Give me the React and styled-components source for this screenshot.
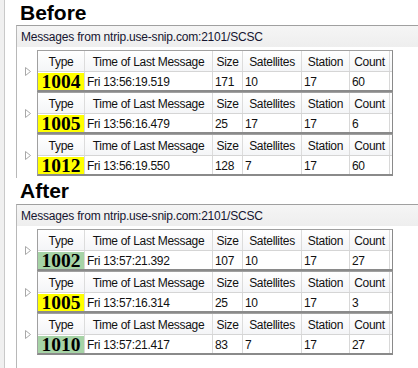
import React from 'react';
import styled, { createGlobalStyle } from 'styled-components';

const GlobalStyle = createGlobalStyle`
  html, body {
    margin: 0;
    padding: 0;
    background: #ffffff;
  }
  body {
    font-family: 'Liberation Sans', Arial, sans-serif;
    color: #111;
  }
`;

const Page = styled.div`
  display: flex;
  width: 418px;
  height: 368px;
  overflow: hidden;
`;

const Edge = styled.div`
  width: 4px;
  flex-shrink: 0;
  background: #f0f0f0;
  border-right: 1px solid #c9c9c9;
`;

const Content = styled.div`
  flex: 1;
  display: flex;
  flex-direction: column;
  padding-left: 11px;
  min-width: 0;
`;

const Title = styled.div`
  height: ${props => props.$height}px;
  padding-left: 4px;
  font-size: 21px;
  font-weight: 700;
  line-height: ${props => props.$height}px;
  color: #000;
`;

const Panel = styled.div`
  border-top: 1px solid #a0a0a0;
  border-left: 1px solid #b8b8b8;
  height: ${props => props.$height}px;
  flex-shrink: 0;
`;

const PanelHeader = styled.div`
  height: 21px;
  padding-left: 4px;
  padding-top: 2px;
  box-sizing: border-box;
  background: linear-gradient(#f5f5f5, #eeeeee);
  font-size: 12px;
  line-height: 19px;
  letter-spacing: -0.2px;
  color: #151530;
  white-space: nowrap;
`;

const PanelBody = styled.div`
  padding-top: 3px;
  display: flex;
  flex-direction: column;
`;

const Group = styled.div`
  display: flex;
  align-items: center;
`;

const Expander = styled.div`
  width: 20px;
  display: flex;
  justify-content: center;
  padding-left: 1px;
  box-sizing: border-box;
`;

const Table = styled.div`
  width: 356px;
  box-sizing: border-box;
  border: 1px solid #a0a0a0;
  border-right-color: #8a8a8a;
  border-bottom: 2px solid #8a8a8a;
`;

const Row = styled.div`
  display: grid;
  grid-template-columns: 47px 128px 30px 59px 48px 40px;
  padding-right: 2px;
  height: ${props => props.$height}px;
`;

const HeadRow = styled(Row)`
  background: linear-gradient(#ffffff, #f4f5f7);
  border-bottom: 1px solid #d5d5d5;
`;

const HeadCell = styled.div`
  border-right: 1px solid #dcdcdc;
  text-align: center;
  font-size: 12px;
  letter-spacing: -0.3px;
  padding-top: 3px;
  line-height: 16px;
  white-space: nowrap;
  overflow: hidden;
`;

const Cell = styled.div`
  border-right: 1px solid #d8d8d8;
  padding-left: 2px;
  padding-top: 2px;
  font-size: 12px;
  letter-spacing: -0.3px;
  line-height: 16px;
  white-space: nowrap;
  overflow: hidden;
`;

const TypeCell = styled.div`
  border-right: 1px solid #d8d8d8;
  padding-top: 1px;
  display: flex;
`;

const TypeBadge = styled.div`
  flex: 1;
  background: ${props => (props.$tone === 'green' ? '#a6d3a6' : '#ffff00')};
  text-align: center;
  font-family: 'Liberation Serif', 'Times New Roman', serif;
  font-weight: 700;
  font-size: 19.5px;
  line-height: 17px;
  color: #000;
`;

const columns = ['Type', 'Time of Last Message', 'Size', 'Satellites', 'Station', 'Count'];

const before = [
  { type: '1004', time: 'Fri 13:56:19.519', size: '171', sats: '10', station: '17', count: '60', tone: 'yellow' },
  { type: '1005', time: 'Fri 13:56:16.479', size: '25', sats: '17', station: '17', count: '6', tone: 'yellow' },
  { type: '1012', time: 'Fri 13:56:19.550', size: '128', sats: '7', station: '17', count: '60', tone: 'yellow' },
];

const after = [
  { type: '1002', time: 'Fri 13:57:21.392', size: '107', sats: '10', station: '17', count: '27', tone: 'green' },
  { type: '1005', time: 'Fri 13:57:16.314', size: '25', sats: '10', station: '17', count: '3', tone: 'yellow' },
  { type: '1010', time: 'Fri 13:57:21.417', size: '83', sats: '7', station: '17', count: '27', tone: 'green' },
];

const Arrow = () => (
  <svg width="6" height="9" viewBox="0 0 6 9">
    <polygon points="0.5,0.5 5.5,4.5 0.5,8.5" fill="#ffffff" stroke="#a8a8a8" strokeWidth="1" />
  </svg>
);

const MessageTable = ({ msg }) => (
  <Group>
    <Expander>
      <Arrow />
    </Expander>
    <Table>
      <HeadRow $height={20}>
        {columns.map(c => (
          <HeadCell key={c}>{c}</HeadCell>
        ))}
      </HeadRow>
      <Row $height={18}>
        <TypeCell>
          <TypeBadge $tone={msg.tone}>{msg.type}</TypeBadge>
        </TypeCell>
        <Cell>{msg.time}</Cell>
        <Cell>{msg.size}</Cell>
        <Cell>{msg.sats}</Cell>
        <Cell>{msg.station}</Cell>
        <Cell>{msg.count}</Cell>
      </Row>
    </Table>
  </Group>
);

const MessagePanel = ({ height, rows }) => (
  <Panel $height={height}>
    <PanelHeader>Messages from ntrip.use-snip.com:2101/SCSC</PanelHeader>
    <PanelBody>
      {rows.map((m, i) => (
        <MessageTable key={i} msg={m} />
      ))}
    </PanelBody>
  </Panel>
);

export default function App() {
  return (
    <>
      <GlobalStyle />
      <Page>
        <Edge />
        <Content>
          <Title $height={25}>Before</Title>
          <MessagePanel height={152} rows={before} />
          <Title $height={26}>After</Title>
          <MessagePanel height={200} rows={after} />
        </Content>
      </Page>
    </>
  );
}
